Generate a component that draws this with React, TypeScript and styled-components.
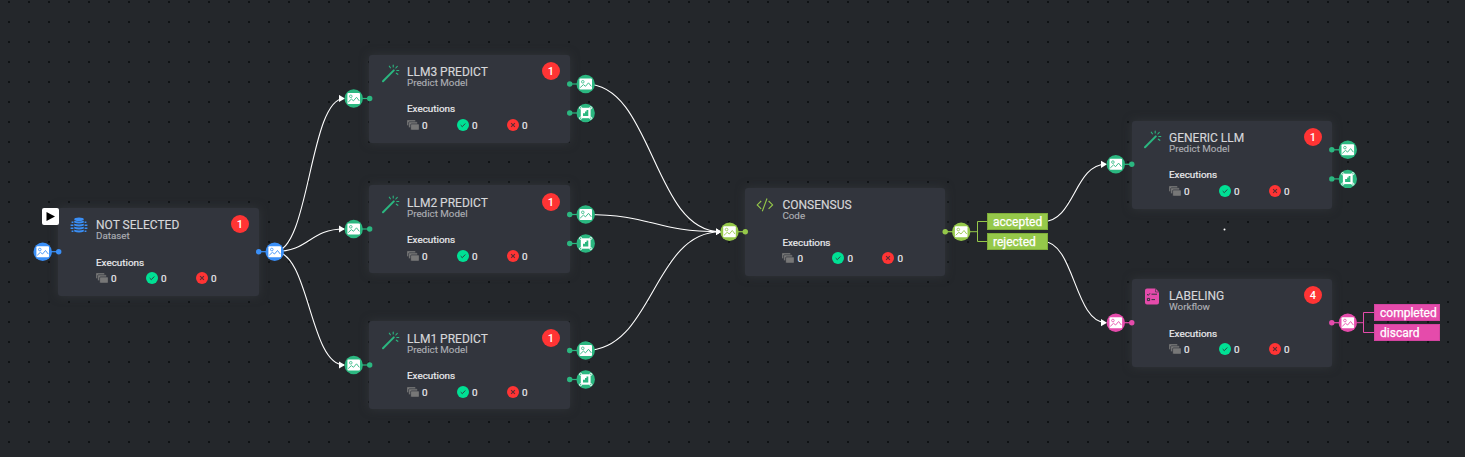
import React from 'react';
import styled, { createGlobalStyle } from 'styled-components';

const GlobalStyle = createGlobalStyle`
  body { margin: 0; background: #24272b; }
  * { box-sizing: border-box; }
`;

const Canvas = styled.main`
  position: relative;
  width: 1465px;
  height: 457px;
  overflow: hidden;
  background: #24272b;
  font-family: Roboto, sans-serif;
`;

const Layer = styled.svg`
  position: absolute;
  inset: 0;
  width: 1465px;
  height: 457px;
`;

const Card = styled.section<{ $x: number; $y: number; $padX: number; $padY: number }>`
  position: absolute;
  left: ${(p) => p.$x}px;
  top: ${(p) => p.$y}px;
  width: ${(p) => 189 + p.$padX}px;
  height: 87.5px;
  display: grid;
  grid-template-columns: 18px minmax(0, 1fr) 18px;
  column-gap: 8px;
  padding: ${(p) => p.$padY}px 10px 0 ${(p) => p.$padX}px;
  border-radius: 3px;
  background: #32353d;
  box-shadow: 0 0 10px rgba(60, 63, 70, 0.55);
`;

const IconSlot = styled.div<{ $color: string }>`
  color: ${(p) => p.$color};
  padding-top: 2px;
  svg { display: block; }
`;

const Body = styled.div`
  display: flex;
  flex-direction: column;
  white-space: nowrap;
`;

const Title = styled.h2`
  margin: 3px 0 0;
  height: 12px;
  font-size: 12px;
  line-height: 15px;
  font-weight: 400;
  color: #d6d7da;
  -webkit-text-stroke: 0.15px currentColor;
`;

const Kind = styled.div`
  height: 11px;
  font-size: 9.8px;
  line-height: 11px;
  color: #acaeb3;
  -webkit-text-stroke: 0.15px currentColor;
`;

const Heading = styled.div<{ $raised?: boolean }>`
  margin-top: ${(p) => (p.$raised ? 15 : 16)}px;
  margin-bottom: ${(p) => (p.$raised ? 4 : 3)}px;
  height: 12px;
  font-size: 9.9px;
  line-height: 12px;
  color: #ececef;
  -webkit-text-stroke: 0.2px currentColor;
`;

const Stats = styled.div`
  display: grid;
  grid-template-columns: repeat(3, 50px);
`;

const Stat = styled.div`
  display: flex;
  align-items: center;
  gap: 3px;
  height: 12px;
  font-size: 9.9px;
  line-height: 12px;
  color: #ececef;
  -webkit-text-stroke: 0.2px currentColor;
  span { padding-top: 1px; }
`;

const Badge = styled.div`
  display: flex;
  align-items: center;
  justify-content: center;
  width: 18px;
  height: 18px;
  border-radius: 50%;
  background: #ff3434;
  color: #fff;
  font-size: 11px;
  font-weight: 500;
`;

const Tags = styled.div<{ $x: number; $y: number; $w: number }>`
  position: absolute;
  left: ${(p) => p.$x}px;
  top: ${(p) => p.$y}px;
  width: ${(p) => p.$w}px;
  display: flex;
  flex-direction: column;
  gap: 3px;
`;

const Tag = styled.div<{ $color: string; $edge: string }>`
  height: 17px;
  padding-left: 5px;
  border: 1px solid ${(p) => p.$edge};
  background: ${(p) => p.$color};
  color: #fff;
  font-size: 12px;
  line-height: 17px;
  -webkit-text-stroke: 0.25px currentColor;
`;

const PlayButton = styled.button`
  position: absolute;
  left: 42px;
  top: 208px;
  width: 17px;
  height: 17px;
  padding: 0;
  border: 0;
  border-radius: 2px;
  background: #fff;
  svg { display: block; }
`;

const BLUE = '#3a8ff7';
const GREEN = '#2bb780';
const LIME = '#95c84a';
const PINK = '#e54bab';

const DatabaseIcon = () => (
  <svg width="18" height="17" viewBox="0 0 18 17" fill="currentColor">
    <ellipse cx="9" cy="2.2" rx="4.8" ry="1.8" />
    {[4.6, 7.6, 10.6, 13.6].map((y) => (
      <path key={y} d={`M4.2 ${y - 0.9}q4.8 1.5 9.6 0v1.9q-4.8 2-9.6 0z`} />
    ))}
    <path
      d="M3.4 5.2H1.6M3.4 8.2H.6M3.4 11.2H.6M3.4 14.2H1.6M14.6 5.2h1.8M14.6 8.2h2.8M14.6 11.2h2.8M14.6 14.2h1.8"
      stroke="currentColor"
      strokeWidth="1.5"
    />
  </svg>
);

const WandIcon = () => (
  <svg width="19" height="19" viewBox="0 0 19 19" fill="none" stroke="currentColor" strokeLinecap="round">
    <path d="M2 17.2 12.8 6.4" strokeWidth="2" />
    <path d="M12.2 1v2M8.3 2.2l1.1 1.6M16.3 2.3l-1.5 1.7M15.8 6.5h2M15.3 9.2l1.5 1.1" strokeWidth="1.1" />
  </svg>
);

const CodeIcon = () => (
  <svg width="18" height="16" viewBox="0 0 18 16" fill="none" stroke="currentColor" strokeWidth="1.1">
    <path d="M5.2 4 1.2 7.9l4 3.9M12.6 4l4 3.9-4 3.9M11 1.5 6.3 14.2" />
  </svg>
);

const FormIcon = () => (
  <svg width="17" height="17" viewBox="-1 0 17 17">
    <path d="M3 .5h8.5L15 4v10.5a2 2 0 0 1-2 2H3a2 2 0 0 1-2-2v-12a2 2 0 0 1 2-2z" fill="currentColor" />
    <path d="m3 6.2 1.3 1.1L6 5.3M7.5 6.2H13M7.5 11.6H11M3.4 10.4h2.2v2.2H3.4z" fill="none" stroke="#32353d" strokeWidth="1" />
    <path d="M11.5.5V4H15" fill="none" stroke="#32353d" strokeWidth=".6" />
  </svg>
);

const QueueIcon = () => (
  <svg width="12" height="10" viewBox="0 0 12 10" fill="#777" stroke="#32353d" strokeWidth=".7">
    <rect x="-.3" y="-.3" width="9" height="6" rx="1" />
    <rect x="1.6" y="1.8" width="9" height="6" rx="1" />
    <rect x="3.6" y="3.9" width="8.7" height="6.3" rx="1" />
  </svg>
);

const PassIcon = () => (
  <svg width="12" height="12" viewBox="0 0 12 12">
    <circle cx="6" cy="6" r="6" fill="#00e094" />
    <path d="m3.7 6.1 1.6 1.6 3-3.2" fill="none" stroke="#2c4a45" strokeWidth="1" />
  </svg>
);

const FailIcon = () => (
  <svg width="12" height="12" viewBox="0 0 12 12">
    <circle cx="6" cy="6" r="6" fill="#ff3434" />
    <path d="m4.1 4.1 3.8 3.8m0-3.8L4.1 7.9" stroke="#5c2c34" strokeWidth="1.1" />
  </svg>
);

type NodeProps = {
  x: number;
  y: number;
  title: string;
  kind: string;
  color: string;
  icon: React.ReactNode;
  count?: number;
  raised?: boolean;
  padX?: number;
  padY?: number;
};

const FlowNode = ({ x, y, title, kind, color, icon, count, raised, padX = 12, padY = 7 }: NodeProps) => (
  <Card $x={x} $y={y} $padX={padX} $padY={padY}>
    <IconSlot $color={color}>{icon}</IconSlot>
    <Body>
      <Title>{title}</Title>
      <Kind>{kind}</Kind>
      <Heading $raised={raised}>Executions</Heading>
      <Stats>
        <Stat><QueueIcon /><span>0</span></Stat>
        <Stat><PassIcon /><span>0</span></Stat>
        <Stat><FailIcon /><span>0</span></Stat>
      </Stats>
    </Body>
    {count !== undefined && <Badge>{count}</Badge>}
  </Card>
);

const nodes: NodeProps[] = [
  { x: 58, y: 208, title: 'NOT SELECTED', kind: 'Dataset', color: BLUE, icon: <DatabaseIcon />, count: 1 },
  { x: 369, y: 55, title: 'LLM3 PREDICT', kind: 'Predict Model', color: GREEN, icon: <WandIcon />, count: 1, raised: true },
  { x: 369, y: 185, title: 'LLM2 PREDICT', kind: 'Predict Model', color: GREEN, icon: <WandIcon />, count: 1, raised: true, padY: 8 },
  { x: 369, y: 321, title: 'LLM1 PREDICT', kind: 'Predict Model', color: GREEN, icon: <WandIcon />, count: 1, raised: true, padY: 8 },
  { x: 745, y: 188, title: 'CONSENSUS', kind: 'Code', color: LIME, icon: <CodeIcon />, padX: 11.4 },
  { x: 1132, y: 121, title: 'GENERIC LLM', kind: 'Predict Model', color: GREEN, icon: <WandIcon />, count: 1, raised: true, padX: 11 },
  { x: 1132, y: 279, title: 'LABELING', kind: 'Workflow', color: PINK, icon: <FormIcon />, count: 4, padX: 11 },
];

type PortProps = { x: number; y: number; dot: number; color: string; shape?: 'image' | 'box' };

const Port = ({ x, y, dot, color, shape = 'image' }: PortProps) => (
  <g>
    <path d={`M${x} ${y}H${dot}`} stroke={color} strokeWidth="1.2" />
    <circle cx={dot} cy={y} r="2.7" fill={color} />
    <circle cx={x} cy={y} r="9.2" fill={color} />
    {shape === 'image' ? (
      <g transform={`translate(${x} ${y})`}>
        <rect x="-6.3" y="-5.5" width="12.6" height="11" rx="1" fill="#fff" />
        <circle cx="-2.9" cy="-2.2" r="1.3" fill="none" stroke={color} strokeWidth=".8" />
        <path d="M-5.5 3.6-2.3.6-.2 2.3 2.8-1.2 5.6 2.4" fill="none" stroke={color} strokeWidth=".9" />
      </g>
    ) : (
      <g transform={`translate(${x} ${y})`}>
        <rect x="-4.9" y="-5.2" width="9.8" height="10.4" fill="#fff" />
        {[-5.1, 5.1].map((cx) => [-5.2, 5.2].map((cy) => (
          <circle key={`${cx}${cy}`} cx={cx} cy={cy} r="1.1" fill={color} stroke="#fff" strokeWidth=".9" />
        )))}
        <path d="M-2.7 3V.2H-.7V-1.4H.8V-3H2.6V3z" fill={color} />
      </g>
    )}
  </g>
);

const ports: PortProps[] = [
  { x: 42.7, y: 251.7, dot: 58.7, color: BLUE },
  { x: 274.7, y: 251.7, dot: 258.7, color: BLUE },
  { x: 353.7, y: 98.5, dot: 369.7, color: GREEN },
  { x: 353.7, y: 229, dot: 369.7, color: GREEN },
  { x: 353.7, y: 365, dot: 369.7, color: GREEN },
  ...[84, 214.5, 350.5].flatMap((y): PortProps[] => [
    { x: 585.7, y, dot: 569.7, color: GREEN },
    { x: 585.7, y: y + 29, dot: 569.7, color: GREEN, shape: 'box' },
  ]),
  { x: 729.5, y: 231.7, dot: 745.3, color: LIME },
  { x: 961.2, y: 231.7, dot: 945.2, color: LIME },
  { x: 1115.8, y: 164.3, dot: 1131.8, color: GREEN },
  { x: 1347.8, y: 149.8, dot: 1331.8, color: GREEN },
  { x: 1347.8, y: 178.9, dot: 1331.8, color: GREEN, shape: 'box' },
  { x: 1115.8, y: 322.7, dot: 1131.8, color: PINK },
  { x: 1347.8, y: 322.7, dot: 1331.8, color: PINK },
];

const wires = [
  'M274.7 251.5C309.5 251.5 309.5 98.5 344 98.5',
  'M274.7 251.5C309.5 251.5 309.5 229 344 229',
  'M274.7 251.5C309.5 251.5 309.5 365 344 365',
  'M585.7 84C653 84 653 231.7 720.5 231.7',
  'M585.7 214.5C653 214.5 653 231.7 720.5 231.7',
  'M585.7 350.5C653 350.5 653 231.7 720.5 231.7',
  'M1043 221.5C1074.5 221.5 1074.5 164.3 1106 164.3',
  'M1043 241.5C1074.5 241.5 1074.5 322.7 1106 322.7',
];

const dotColumns = Array.from({ length: 73 }, (_, i) => Math.round(8.05 + 19.985 * i));
const dotRows = Array.from({ length: 23 }, (_, i) => 1 + 20 * i);

const App = () => (
  <>
    <GlobalStyle />
    <Canvas>
      <Layer fill="#0f1214" shapeRendering="crispEdges">
        {dotRows.map((y) => dotColumns.map((x) => <rect key={`${x}-${y}`} x={x} y={y} width="2" height="2" />))}
      </Layer>
      {nodes.map((node) => <FlowNode key={node.title} {...node} />)}
      <Layer fill="none">
        <defs>
          <marker id="arrow" markerUnits="userSpaceOnUse" markerWidth="6" markerHeight="8" refX="5" refY="4" orient="auto">
            <path d="M0 .4 6 4 0 7.6z" fill="#fff" />
          </marker>
        </defs>
        {wires.map((d) => <path key={d} d={d} stroke="#fff" strokeWidth="1.1" markerEnd="url(#arrow)" />)}
        <path d="M970 231.7h7M987 221.5h-9.5v20h9.5" stroke={LIME} />
        <path d="M1357 322.7h7M1374 312.5h-10.5v20h10.5" stroke={PINK} />
        {ports.map((port) => <Port key={`${port.x}-${port.y}`} {...port} />)}
        <circle cx="1224.5" cy="229.5" r="1" fill="#fff" />
      </Layer>
      <Tags $x={987} $y={213} $w={61}>
        <Tag $color={LIME} $edge="#7fae3a">accepted</Tag>
        <Tag $color={LIME} $edge="#7fae3a">rejected</Tag>
      </Tags>
      <Tags $x={1374} $y={304} $w={66}>
        <Tag $color={PINK} $edge="#d344a0">completed</Tag>
        <Tag $color={PINK} $edge="#d344a0">discard</Tag>
      </Tags>
      <PlayButton aria-label="Run">
        <svg width="17" height="17" viewBox="0 0 17 17"><path d="M4.5 4v9L13 8.5z" fill="#000" /></svg>
      </PlayButton>
    </Canvas>
  </>
);

export default App;
